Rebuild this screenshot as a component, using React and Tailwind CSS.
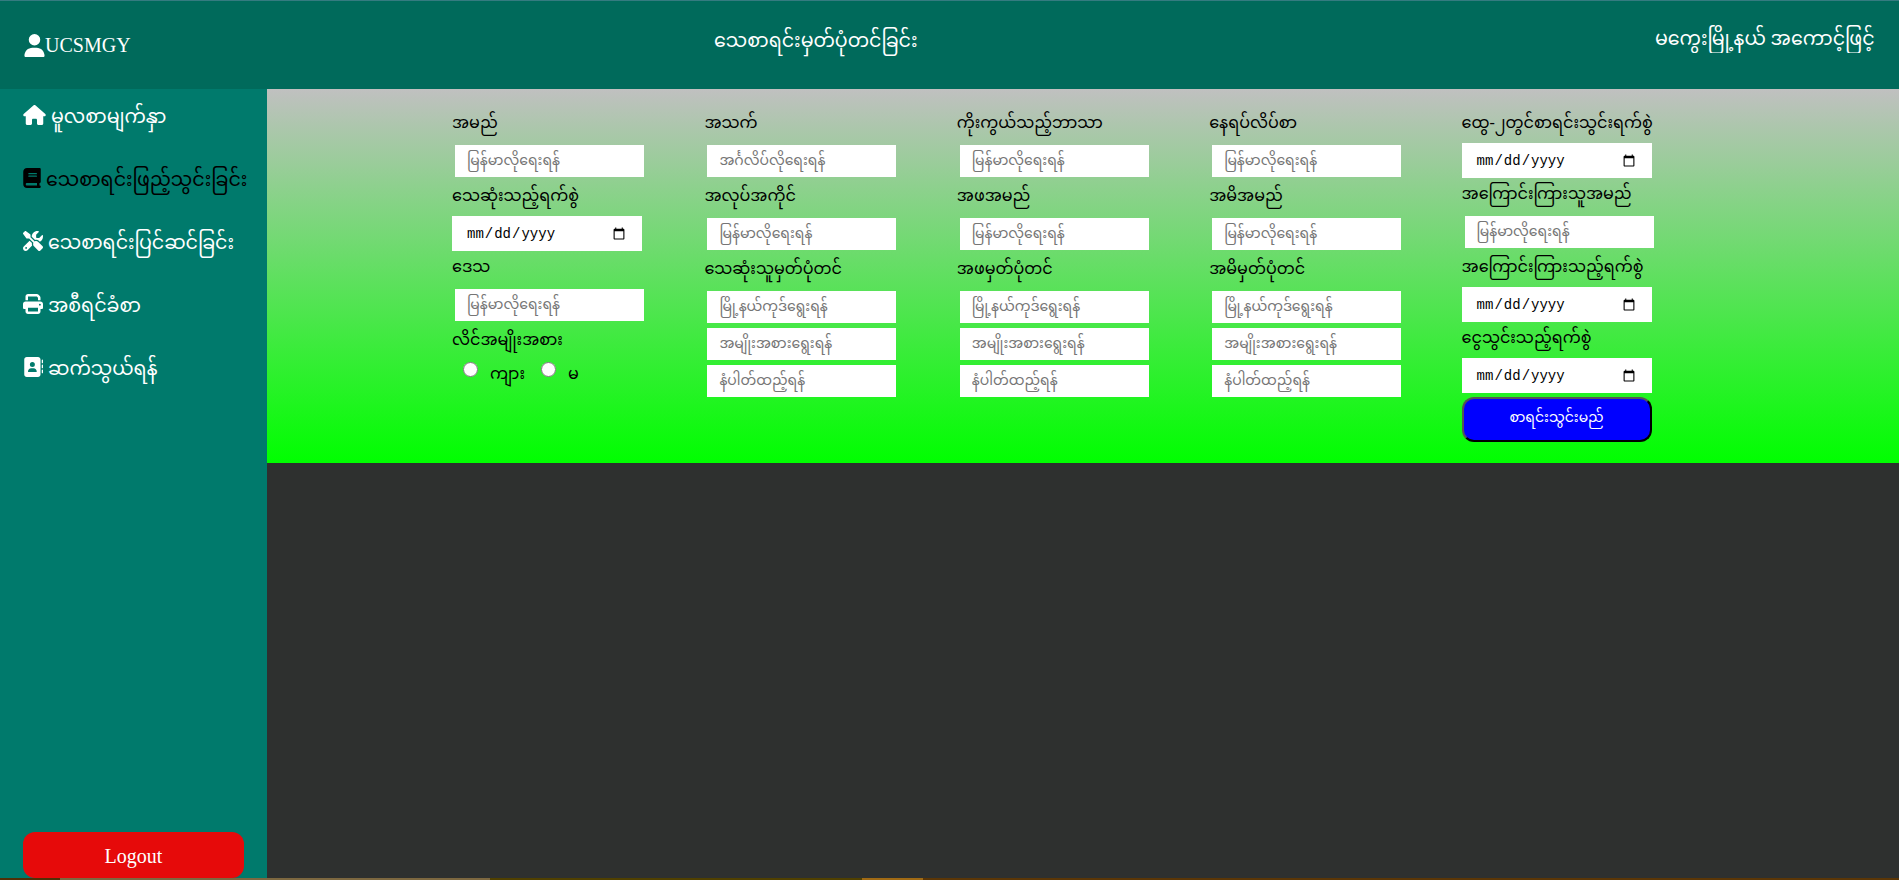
import { FaUser, FaHouse, FaBook, FaScrewdriverWrench, FaPrint, FaAddressBook } from "react-icons/fa6";

const NAV = [
  { icon: FaHouse, size: "h-5 w-[23px]", text: "မူလစာမျက်နှာ" },
  { icon: FaBook, size: "h-5 w-[18px]", text: "သေစာရင်းဖြည့်သွင်းခြင်း", active: true },
  { icon: FaScrewdriverWrench, size: "size-5", text: "သေစာရင်းပြင်ဆင်ခြင်း" },
  { icon: FaPrint, size: "size-5", text: "အစီရင်ခံစာ" },
  { icon: FaAddressBook, size: "size-5", text: "ဆက်သွယ်ရန်" },
];

const WRITE_MM = "မြန်မာလိုရေးရန်";
const NRC = ["မြို့နယ်ကုဒ်ရွေးရန်", "အမျိုးအစားရွေးရန်", "နံပါတ်ထည့်ရန်"];

const COLUMNS = [
  [
    { id: "name", label: "အမည်", hints: [WRITE_MM] },
    { id: "death-date", label: "သေဆုံးသည့်ရက်စွဲ", date: true },
    { id: "region", label: "ဒေသ", hints: [WRITE_MM] },
    { id: "gender", label: "လိင်အမျိုးအစား", options: ["ကျား", "မ"] },
  ],
  [
    { id: "age", label: "အသက်", hints: ["အင်္ဂလိပ်လိုရေးရန်"] },
    { id: "job", label: "အလုပ်အကိုင်", hints: [WRITE_MM] },
    { id: "nrc", label: "သေဆုံးသူမှတ်ပုံတင်", hints: NRC },
  ],
  [
    { id: "religion", label: "ကိုးကွယ်သည့်ဘာသာ", hints: [WRITE_MM] },
    { id: "father", label: "အဖအမည်", hints: [WRITE_MM] },
    { id: "father-nrc", label: "အဖမှတ်ပုံတင်", hints: NRC },
  ],
  [
    { id: "address", label: "နေရပ်လိပ်စာ", hints: [WRITE_MM] },
    { id: "mother", label: "အမိအမည်", hints: [WRITE_MM] },
    { id: "mother-nrc", label: "အမိမှတ်ပုံတင်", hints: NRC },
  ],
  [
    { id: "entry-date", label: "ထွေ-၂တွင်စာရင်းသွင်းရက်စွဲ", date: true },
    { id: "informant", label: "အကြောင်းကြားသူအမည်", hints: [WRITE_MM] },
    { id: "inform-date", label: "အကြောင်းကြားသည့်ရက်စွဲ", date: true },
    { id: "payment-date", label: "ငွေသွင်းသည့်ရက်စွဲ", date: true },
  ],
];

function Field({ id, label, hints, date, options }) {
  if (options) {
    return (
      <fieldset>
        <legend className="h-9 leading-8 whitespace-nowrap">{label}</legend>
        <div className="flex items-start pt-0.5 pl-[11px]">
          {options.map((o) => (
            <label key={o} className="mr-4 flex items-start gap-3">
              <input type="radio" name={id} className="h-[15px] w-[15px]" />
              {o}
            </label>
          ))}
        </div>
      </fieldset>
    );
  }
  return (
    <div>
      <label htmlFor={id} className="block h-9 leading-8 whitespace-nowrap">
        {label}
      </label>
      {date ? (
        <input
          id={id}
          type="date"
          className="block h-[35px] w-[190px] bg-white px-3.5 font-['Liberation_Mono',monospace] text-sm"
        />
      ) : (
        <div className="flex flex-col gap-[5px] px-[3px] pt-0.5 pb-[3px]">
          {hints.map((h, i) => (
            <input
              key={h}
              id={i === 0 ? id : `${id}-${i}`}
              aria-label={i === 0 ? undefined : h}
              type="text"
              placeholder={h}
              className="h-8 w-[189px] bg-white px-3 text-sm placeholder:text-[#757575]"
            />
          ))}
        </div>
      )}
    </div>
  );
}

export default function App() {
  return (
    <div className="flex h-screen flex-col overflow-hidden bg-[#2e302f] font-['Liberation_Serif','Myanmar_Text','Noto_Sans_Myanmar','Padauk',serif] text-base text-black">
      <header className="grid h-[89px] shrink-0 grid-cols-[11fr_15fr_220px] items-center border-t border-[#357b80] bg-[#006a5b] px-6 text-[19px] text-white">
        <div className="flex items-center text-xl">
          <FaUser className="h-[23px] w-[21px]" />
          UCSMGY
        </div>
        <h1 className="-mt-2">သေစာရင်းမှတ်ပုံတင်ခြင်း</h1>
        <p className="-mt-3 overflow-hidden whitespace-nowrap">မကွေးမြို့နယ် အကောင့်ဖြင့်ဝင်ရောက်</p>
      </header>
      <div className="flex min-h-0 flex-1">
        <aside className="flex w-[267px] shrink-0 flex-col bg-[#007a6c] pr-[23px] pl-[23px] text-[19px] text-white">
          <nav className="flex flex-col">
            {NAV.map(({ icon: Icon, size, text, active }) => (
              <a
                key={text}
                href="#"
                className={`flex h-[63px] items-start gap-[5px] pt-2 leading-10 whitespace-nowrap ${active ? "text-black" : "text-white"}`}
              >
                <Icon className={`mt-2 shrink-0 ${size}`} />
                {text}
              </a>
            ))}
          </nav>
          <button type="button" className="mt-auto h-[46px] shrink-0 rounded-xl bg-[#e60a0a] pt-0.5 text-xl text-white">
            Logout
          </button>
        </aside>
        <main className="min-w-0 flex-1">
          <form className="bg-linear-to-b/srgb from-[#c0c0c0] to-[#00ff00] pt-[18px] pb-[21px]">
            <div className="mx-auto grid max-w-[1262px] grid-cols-5">
              {COLUMNS.map((fields, i) => (
                <div key={i}>
                  {fields.map((f) => (
                    <Field key={f.id} {...f} />
                  ))}
                  {i === 4 && (
                    <button
                      type="submit"
                      className="mt-1 block h-[45px] w-[190px] rounded-xl border-2 border-t-[#555] border-r-black border-b-black border-l-[#555] bg-[#0000ff] pb-1 text-sm text-white"
                    >
                      စာရင်းသွင်းမည်
                    </button>
                  )}
                </div>
              ))}
            </div>
          </form>
        </main>
      </div>
      <div aria-hidden="true" className="flex h-0.5 shrink-0">
        <span className="w-[60px] bg-[#4f3007]" />
        <span className="w-[430px] bg-[#7d6840]" />
        <span className="w-[372px] bg-[#504000]" />
        <span className="w-[61px] bg-[#a06a14]" />
        <span className="flex-1 bg-[#5b3606]" />
      </div>
    </div>
  );
}
